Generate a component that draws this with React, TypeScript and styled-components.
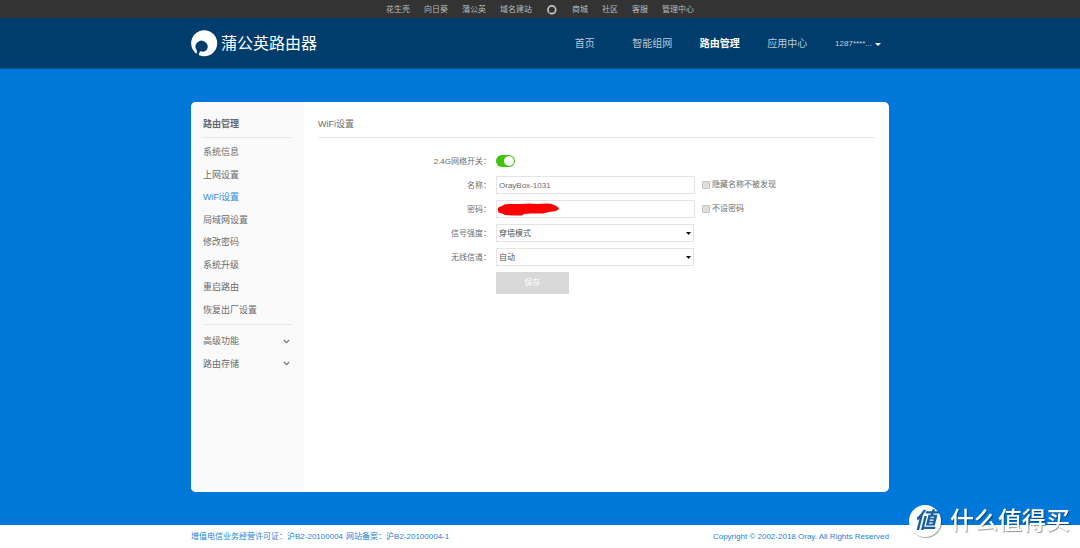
import React from 'react';
import styled, { createGlobalStyle } from 'styled-components';

const GlobalStyle = createGlobalStyle`
  *, *::before, *::after { box-sizing: border-box; }
  body {
    margin: 0;
    background: #fff;
    color: #6c6c6c;
    font-family: "Liberation Sans", "Noto Sans CJK SC", sans-serif;
    font-size: 8px;
    line-height: 12px;
  }
  a { color: inherit; text-decoration: none; }
  button, input, select { font: inherit; color: inherit; }
  ul { list-style: none; margin: 0; padding: 0; }
`;

const Page = styled.div`
  display: flex;
  flex-direction: column;
  min-height: 100vh;
`;

const Container = styled.div`
  width: 100%;
  max-width: 698px;
  margin: 0 auto;
`;

const TopBar = styled.nav`
  display: flex;
  justify-content: center;
  align-items: center;
  gap: 14px;
  height: 18px;
  padding-top: 1px;
  background: #333;
  color: #bbb;
  white-space: nowrap;
`;

const TopLink = styled.a`
  display: flex;
`;

const Header = styled.header`
  background: #003c6c;
  border-bottom: 1px solid #005394;
`;

const HeaderInner = styled(Container)`
  display: flex;
  align-items: center;
  justify-content: space-between;
  height: 50px;
  padding-top: 2px;
`;

const Brand = styled.a`
  display: flex;
  align-items: center;
  gap: 3px;
  color: #fff;
  font-size: 16px;
  line-height: 24px;
  white-space: nowrap;
`;

const MainNav = styled.nav`
  display: flex;
  align-items: center;
  padding-right: 8px;
`;

const NavGrid = styled.div`
  display: grid;
  grid-template-columns: repeat(4, 1fr);
  width: 270px;
  margin-right: 14px;
`;

const NavLink = styled.a<{ $active?: boolean }>`
  color: ${(p) => (p.$active ? '#fff' : '#b9cad8')};
  font-size: 10px;
  line-height: 16px;
  font-weight: ${(p) => (p.$active ? 700 : 400)};
  text-align: center;
`;

const UserButton = styled.button`
  display: flex;
  align-items: center;
  gap: 3px;
  padding: 0;
  border: 0;
  background: none;
  color: #c3d1dd;
`;

const Main = styled.main`
  flex: 1;
  display: flex;
  padding: 33px 0;
  background: #0078da;
`;

const Panel = styled(Container)`
  display: flex;
  overflow: hidden;
  border-radius: 5px;
  background: #fff;
`;

const Sidebar = styled.aside`
  width: 113px;
  padding: 12px;
  background: #fafafa;
  font-size: 9px;
  line-height: 20px;
`;

const SideTitle = styled.h2`
  margin: 0;
  padding-bottom: 3px;
  border-bottom: 1px solid #e6e6e6;
  color: #666;
  font-size: 9px;
  line-height: 20px;
  font-weight: 700;
`;

const SideList = styled.ul<{ $height: number }>`
  display: grid;
  grid-auto-rows: 1fr;
  align-items: center;
  height: ${(p) => p.$height}px;
`;

const SideGroup = styled.div`
  padding: 3px 0;

  & + & {
    padding-top: 5px;
    border-top: 1px solid #e6e6e6;
  }
`;

const SideLink = styled.a<{ $active?: boolean }>`
  display: block;
  color: ${(p) => (p.$active ? '#2b8ce0' : 'inherit')};
`;

const SideToggle = styled.button`
  display: flex;
  justify-content: space-between;
  align-items: center;
  width: 100%;
  padding: 0 2px 0 0;
  border: 0;
  background: none;
  text-align: left;
`;

const Content = styled.section`
  flex: 1;
  min-width: 0;
  padding: 12px 14px;
`;

const ContentTitle = styled.h1`
  margin: 0 0 14px;
  padding-bottom: 3px;
  border-bottom: 1px solid #e6e6e6;
  font-size: 9px;
  line-height: 20px;
  font-weight: 400;
`;

const Form = styled.form`
  display: flex;
  flex-direction: column;
  gap: 6px;
`;

const Row = styled.div`
  display: grid;
  grid-template-columns: 173px 199px 1fr;
  align-items: center;
  column-gap: 5px;
  min-height: 18px;
`;

const Label = styled.label`
  padding-top: 1px;
  text-align: right;
`;

const Field = styled.div`
  position: relative;
  display: flex;
`;

const TextInput = styled.input`
  width: 100%;
  height: 18px;
  padding: 0 2px;
  border: 1px solid #e4e4e4;
  border-radius: 0;
  background: #fff;
  outline: 0;
`;

const Select = styled.select`
  appearance: none;
  width: 198px;
  height: 18px;
  padding: 1px 2px 0;
  border: 1px solid #e4e4e4;
  border-radius: 0;
  background: #fff;
  color: #555;
`;

const SelectArrow = styled.svg`
  position: absolute;
  right: 4px;
  top: 8px;
  pointer-events: none;
`;

const Scribble = styled.svg`
  position: absolute;
  left: 1px;
  top: 3px;
  pointer-events: none;
`;

const Switch = styled.input`
  appearance: none;
  display: flex;
  width: 19px;
  height: 12px;
  margin: 0;
  padding: 1px;
  border-radius: 6px;
  background: #ccc;

  &::before {
    content: '';
    width: 10px;
    height: 10px;
    border-radius: 50%;
    background: #fff;
  }

  &:checked {
    justify-content: flex-end;
    background: #3fc20a;
  }
`;

const CheckLabel = styled.label`
  display: flex;
  align-items: center;
  gap: 2px;
  padding-left: 2px;
`;

const CheckBox = styled.input`
  appearance: none;
  width: 8px;
  height: 8px;
  margin: 0;
  border: 1px solid #c4c4c4;
  border-radius: 1px;
  background: #dedede;

  &:checked { background: #2b8ce0; }
`;

const SaveButton = styled.button`
  grid-column: 2;
  width: 73px;
  height: 22px;
  padding: 0;
  border: 0;
  background: #d8d8d8;
  color: #fff;
`;

const Footer = styled.footer`
  color: #2484dc;
  white-space: nowrap;
`;

const FooterInner = styled(Container)`
  display: flex;
  align-items: center;
  justify-content: space-between;
  height: 23px;
`;

const Records = styled.div`
  display: flex;
  gap: 3px;
`;

const Watermark = styled.div`
  position: fixed;
  right: 10px;
  bottom: 10px;
  display: flex;
  align-items: center;
  gap: 9px;
  color: #fff;
  font-size: 24px;
  line-height: 34px;
  font-weight: 500;
  text-shadow: 1px 1px 1px rgba(0, 0, 0, 0.4);
  white-space: nowrap;
`;

const WatermarkBadge = styled.span`
  display: grid;
  place-items: center;
  width: 32px;
  height: 32px;
  border-radius: 50%;
  background: #fff;
  box-shadow: 1px 1px 1px rgba(0, 0, 0, 0.35);
  color: #17609f;
  font-size: 22px;
  line-height: 32px;
  font-style: italic;
  font-weight: 700;
  text-shadow: none;
`;

const RingIcon = () => (
  <svg width="12" height="12" viewBox="0 0 12 12" aria-hidden="true">
    <circle cx="5.8" cy="5.8" r="3.9" fill="none" stroke="#c4c4c4" strokeWidth="1.7" />
    <path d="M3.4 8.2L2.8 10" stroke="#333" strokeWidth="0.7" />
  </svg>
);

const BrandIcon = () => (
  <svg width="27" height="28" viewBox="0 0 27 28" aria-hidden="true">
    <circle cx="13.2" cy="13.2" r="13" fill="#fff" />
    <path
      d="M5 27L5.6 22.9C6.3 22 6 21 5.6 20.2A6 6 0 1 1 15.6 20.1C14 21.8 11.6 22 9.6 21.3C8.4 21.6 8.6 22.6 8.2 23.6L7.2 26.8Z"
      fill="#003c6c"
    />
  </svg>
);

const Chevron = () => (
  <svg width="7" height="5" viewBox="0 0 7 5" aria-hidden="true">
    <path d="M0.8 1L3.5 3.7L6.2 1" fill="none" stroke="#777" strokeWidth="1.1" />
  </svg>
);

const topLinks = ['花生壳', '向日葵', '蒲公英', '域名建站', null, '商城', '社区', '客服', '管理中心'];
const navLinks = ['首页', '智能组网', '路由管理', '应用中心'];
const sideLinks = ['系统信息', '上网设置', 'WiFi设置', '局域网设置', '修改密码', '系统升级', '重启路由', '恢复出厂设置'];
const sideGroups = ['高级功能', '路由存储'];

const selects = [
  { id: 'signal', label: '信号强度：', value: '穿墙模式' },
  { id: 'channel', label: '无线信道：', value: '自动' },
];

export default function App() {
  return (
    <Page>
      <GlobalStyle />
      <TopBar>
        {topLinks.map((text) => (
          <TopLink key={text ?? 'home'} href="#" aria-label={text ?? 'Oray'}>
            {text ?? <RingIcon />}
          </TopLink>
        ))}
      </TopBar>

      <Header>
        <HeaderInner>
          <Brand href="#">
            <BrandIcon />
            蒲公英路由器
          </Brand>
          <MainNav>
            <NavGrid>
              {navLinks.map((text) => (
                <NavLink key={text} href="#" $active={text === '路由管理'}>
                  {text}
                </NavLink>
              ))}
            </NavGrid>
            <UserButton type="button">
              1287****...
              <svg width="6" height="3" viewBox="0 0 6 3" aria-hidden="true">
                <path d="M0 0H6L3 3Z" fill="#fff" />
              </svg>
            </UserButton>
          </MainNav>
        </HeaderInner>
      </Header>

      <Main>
        <Panel>
          <Sidebar>
            <SideTitle>路由管理</SideTitle>
            <SideGroup>
              <SideList $height={180}>
                {sideLinks.map((text) => (
                  <li key={text}>
                    <SideLink href="#" $active={text === 'WiFi设置'}>
                      {text}
                    </SideLink>
                  </li>
                ))}
              </SideList>
            </SideGroup>
            <SideGroup>
              <SideList $height={45}>
                {sideGroups.map((text) => (
                  <li key={text}>
                    <SideToggle type="button">
                      {text}
                      <Chevron />
                    </SideToggle>
                  </li>
                ))}
              </SideList>
            </SideGroup>
          </Sidebar>

          <Content>
            <ContentTitle>WiFi设置</ContentTitle>
            <Form>
              <Row>
                <Label htmlFor="enabled">2.4G网络开关：</Label>
                <Field>
                  <Switch id="enabled" type="checkbox" defaultChecked />
                </Field>
              </Row>
              <Row>
                <Label htmlFor="name">名称：</Label>
                <Field>
                  <TextInput id="name" type="text" defaultValue="OrayBox-1031" />
                </Field>
                <CheckLabel>
                  <CheckBox type="checkbox" />
                  隐藏名称不被发现
                </CheckLabel>
              </Row>
              <Row>
                <Label htmlFor="password">密码：</Label>
                <Field>
                  <TextInput id="password" type="text" />
                  <Scribble width="62" height="13" viewBox="0 0 62 13" aria-hidden="true">
                    <path
                      d="M0.5 6L2 4L5 3L8 1.2L14 1L24 1L32 0.6L40 1L50 0.6L55 1L58 2.5L61 4L62 6L59 8L52 9L46 10.5L34 10.5L27 11L25 12.4L16 12.4L8 12L5 10.5L1.5 9.5Z"
                      fill="#f00"
                    />
                  </Scribble>
                </Field>
                <CheckLabel>
                  <CheckBox type="checkbox" />
                  不设密码
                </CheckLabel>
              </Row>
              {selects.map(({ id, label, value }) => (
                <Row key={id}>
                  <Label htmlFor={id}>{label}</Label>
                  <Field>
                    <Select id={id}>
                      <option>{value}</option>
                    </Select>
                    <SelectArrow width="5" height="3" viewBox="0 0 5 3" aria-hidden="true">
                      <path d="M0 0H5L2.5 3Z" fill="#111" />
                    </SelectArrow>
                  </Field>
                </Row>
              ))}
              <Row>
                <SaveButton type="button">保存</SaveButton>
              </Row>
            </Form>
          </Content>
        </Panel>
      </Main>

      <Footer>
        <FooterInner>
          <Records>
            <a href="#">增值电信业务经营许可证：沪B2-20100004</a>
            <a href="#">网站备案：沪B2-20100004-1</a>
          </Records>
          <span>Copyright © 2002-2018 Oray. All Rights Reserved</span>
        </FooterInner>
      </Footer>

      <Watermark>
        <WatermarkBadge>値</WatermarkBadge>
        什么值得买
      </Watermark>
    </Page>
  );
}
